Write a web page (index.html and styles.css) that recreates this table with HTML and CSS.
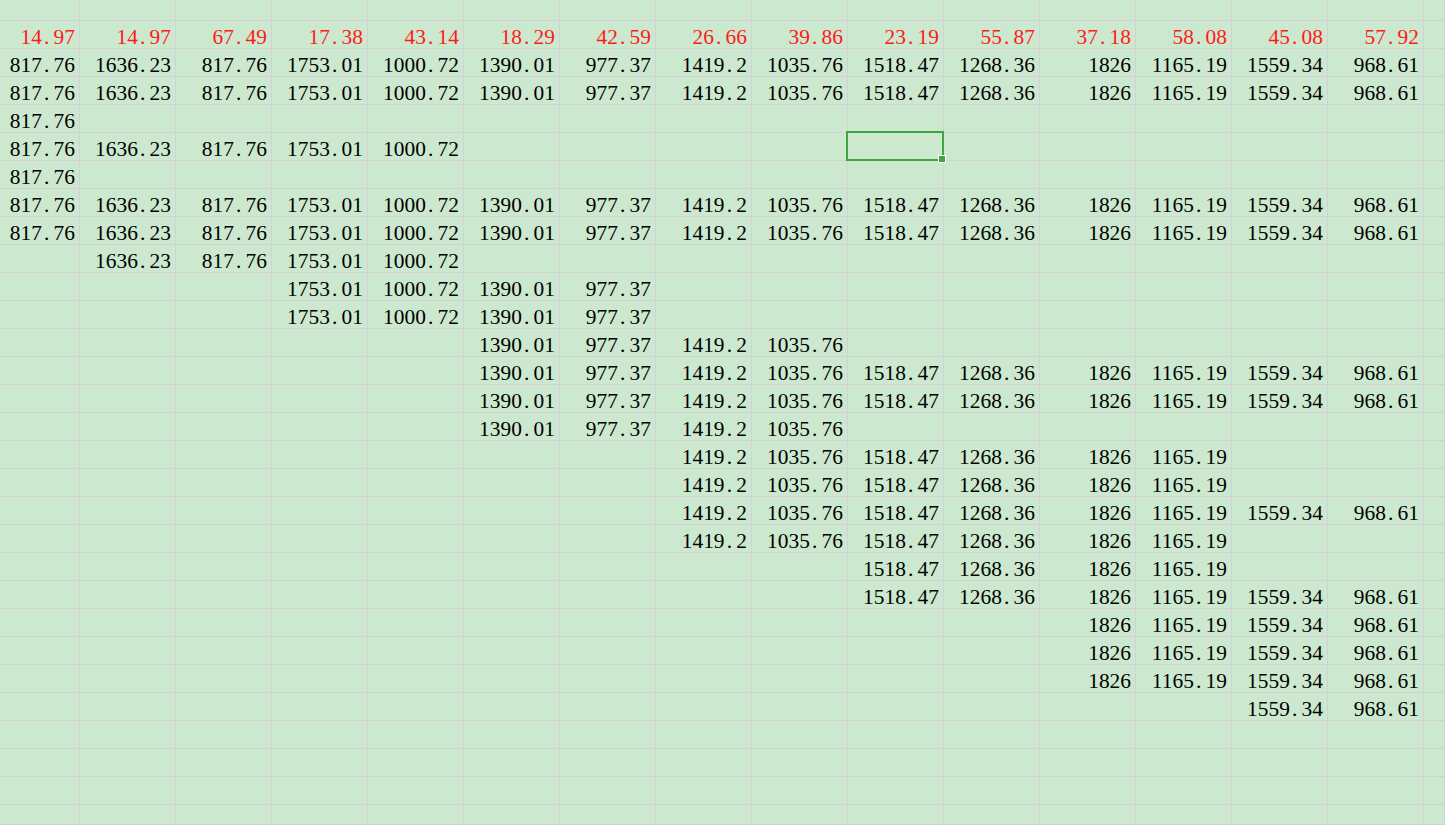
FILE: index.html
```html
<!DOCTYPE html>
<html lang="zh">
<head>
<meta charset="utf-8">
<title>Sheet</title>
<link rel="stylesheet" href="styles.css">
</head>
<body>
<div class="sheet">
<!-- row 0 -->
<div></div><div></div><div></div><div></div><div></div><div></div><div></div><div></div><div></div><div></div><div></div><div></div><div></div><div></div><div></div><div></div>
<!-- row 1 header -->
<div class="r">14<span class="pt">.</span>97</div><div class="r">14<span class="pt">.</span>97</div><div class="r">67<span class="pt">.</span>49</div><div class="r">17<span class="pt">.</span>38</div><div class="r">43<span class="pt">.</span>14</div><div class="r">18<span class="pt">.</span>29</div><div class="r">42<span class="pt">.</span>59</div><div class="r">26<span class="pt">.</span>66</div><div class="r">39<span class="pt">.</span>86</div><div class="r">23<span class="pt">.</span>19</div><div class="r">55<span class="pt">.</span>87</div><div class="r">37<span class="pt">.</span>18</div><div class="r">58<span class="pt">.</span>08</div><div class="r">45<span class="pt">.</span>08</div><div class="r">57<span class="pt">.</span>92</div><div></div>
<!-- row 2 -->
<div>817<span class="pt">.</span>76</div><div>1636<span class="pt">.</span>23</div><div>817<span class="pt">.</span>76</div><div>1753<span class="pt">.</span>01</div><div>1000<span class="pt">.</span>72</div><div>1390<span class="pt">.</span>01</div><div>977<span class="pt">.</span>37</div><div>1419<span class="pt">.</span>2</div><div>1035<span class="pt">.</span>76</div><div>1518<span class="pt">.</span>47</div><div>1268<span class="pt">.</span>36</div><div>1826</div><div>1165<span class="pt">.</span>19</div><div>1559<span class="pt">.</span>34</div><div>968<span class="pt">.</span>61</div><div></div>
<!-- row 3 -->
<div>817<span class="pt">.</span>76</div><div>1636<span class="pt">.</span>23</div><div>817<span class="pt">.</span>76</div><div>1753<span class="pt">.</span>01</div><div>1000<span class="pt">.</span>72</div><div>1390<span class="pt">.</span>01</div><div>977<span class="pt">.</span>37</div><div>1419<span class="pt">.</span>2</div><div>1035<span class="pt">.</span>76</div><div>1518<span class="pt">.</span>47</div><div>1268<span class="pt">.</span>36</div><div>1826</div><div>1165<span class="pt">.</span>19</div><div>1559<span class="pt">.</span>34</div><div>968<span class="pt">.</span>61</div><div></div>
<!-- row 4 -->
<div>817<span class="pt">.</span>76</div><div></div><div></div><div></div><div></div><div></div><div></div><div></div><div></div><div></div><div></div><div></div><div></div><div></div><div></div><div></div>
<!-- row 5 -->
<div>817<span class="pt">.</span>76</div><div>1636<span class="pt">.</span>23</div><div>817<span class="pt">.</span>76</div><div>1753<span class="pt">.</span>01</div><div>1000<span class="pt">.</span>72</div><div></div><div></div><div></div><div></div><div class="sel"></div><div></div><div></div><div></div><div></div><div></div><div></div>
<!-- row 6 -->
<div>817<span class="pt">.</span>76</div><div></div><div></div><div></div><div></div><div></div><div></div><div></div><div></div><div></div><div></div><div></div><div></div><div></div><div></div><div></div>
<!-- row 7 -->
<div>817<span class="pt">.</span>76</div><div>1636<span class="pt">.</span>23</div><div>817<span class="pt">.</span>76</div><div>1753<span class="pt">.</span>01</div><div>1000<span class="pt">.</span>72</div><div>1390<span class="pt">.</span>01</div><div>977<span class="pt">.</span>37</div><div>1419<span class="pt">.</span>2</div><div>1035<span class="pt">.</span>76</div><div>1518<span class="pt">.</span>47</div><div>1268<span class="pt">.</span>36</div><div>1826</div><div>1165<span class="pt">.</span>19</div><div>1559<span class="pt">.</span>34</div><div>968<span class="pt">.</span>61</div><div></div>
<!-- row 8 -->
<div>817<span class="pt">.</span>76</div><div>1636<span class="pt">.</span>23</div><div>817<span class="pt">.</span>76</div><div>1753<span class="pt">.</span>01</div><div>1000<span class="pt">.</span>72</div><div>1390<span class="pt">.</span>01</div><div>977<span class="pt">.</span>37</div><div>1419<span class="pt">.</span>2</div><div>1035<span class="pt">.</span>76</div><div>1518<span class="pt">.</span>47</div><div>1268<span class="pt">.</span>36</div><div>1826</div><div>1165<span class="pt">.</span>19</div><div>1559<span class="pt">.</span>34</div><div>968<span class="pt">.</span>61</div><div></div>
<!-- row 9 -->
<div></div><div>1636<span class="pt">.</span>23</div><div>817<span class="pt">.</span>76</div><div>1753<span class="pt">.</span>01</div><div>1000<span class="pt">.</span>72</div><div></div><div></div><div></div><div></div><div></div><div></div><div></div><div></div><div></div><div></div><div></div>
<!-- row 10 -->
<div></div><div></div><div></div><div>1753<span class="pt">.</span>01</div><div>1000<span class="pt">.</span>72</div><div>1390<span class="pt">.</span>01</div><div>977<span class="pt">.</span>37</div><div></div><div></div><div></div><div></div><div></div><div></div><div></div><div></div><div></div>
<!-- row 11 -->
<div></div><div></div><div></div><div>1753<span class="pt">.</span>01</div><div>1000<span class="pt">.</span>72</div><div>1390<span class="pt">.</span>01</div><div>977<span class="pt">.</span>37</div><div></div><div></div><div></div><div></div><div></div><div></div><div></div><div></div><div></div>
<!-- row 12 -->
<div></div><div></div><div></div><div></div><div></div><div>1390<span class="pt">.</span>01</div><div>977<span class="pt">.</span>37</div><div>1419<span class="pt">.</span>2</div><div>1035<span class="pt">.</span>76</div><div></div><div></div><div></div><div></div><div></div><div></div><div></div>
<!-- row 13 -->
<div></div><div></div><div></div><div></div><div></div><div>1390<span class="pt">.</span>01</div><div>977<span class="pt">.</span>37</div><div>1419<span class="pt">.</span>2</div><div>1035<span class="pt">.</span>76</div><div>1518<span class="pt">.</span>47</div><div>1268<span class="pt">.</span>36</div><div>1826</div><div>1165<span class="pt">.</span>19</div><div>1559<span class="pt">.</span>34</div><div>968<span class="pt">.</span>61</div><div></div>
<!-- row 14 -->
<div></div><div></div><div></div><div></div><div></div><div>1390<span class="pt">.</span>01</div><div>977<span class="pt">.</span>37</div><div>1419<span class="pt">.</span>2</div><div>1035<span class="pt">.</span>76</div><div>1518<span class="pt">.</span>47</div><div>1268<span class="pt">.</span>36</div><div>1826</div><div>1165<span class="pt">.</span>19</div><div>1559<span class="pt">.</span>34</div><div>968<span class="pt">.</span>61</div><div></div>
<!-- row 15 -->
<div></div><div></div><div></div><div></div><div></div><div>1390<span class="pt">.</span>01</div><div>977<span class="pt">.</span>37</div><div>1419<span class="pt">.</span>2</div><div>1035<span class="pt">.</span>76</div><div></div><div></div><div></div><div></div><div></div><div></div><div></div>
<!-- row 16 -->
<div></div><div></div><div></div><div></div><div></div><div></div><div></div><div>1419<span class="pt">.</span>2</div><div>1035<span class="pt">.</span>76</div><div>1518<span class="pt">.</span>47</div><div>1268<span class="pt">.</span>36</div><div>1826</div><div>1165<span class="pt">.</span>19</div><div></div><div></div><div></div>
<!-- row 17 -->
<div></div><div></div><div></div><div></div><div></div><div></div><div></div><div>1419<span class="pt">.</span>2</div><div>1035<span class="pt">.</span>76</div><div>1518<span class="pt">.</span>47</div><div>1268<span class="pt">.</span>36</div><div>1826</div><div>1165<span class="pt">.</span>19</div><div></div><div></div><div></div>
<!-- row 18 -->
<div></div><div></div><div></div><div></div><div></div><div></div><div></div><div>1419<span class="pt">.</span>2</div><div>1035<span class="pt">.</span>76</div><div>1518<span class="pt">.</span>47</div><div>1268<span class="pt">.</span>36</div><div>1826</div><div>1165<span class="pt">.</span>19</div><div>1559<span class="pt">.</span>34</div><div>968<span class="pt">.</span>61</div><div></div>
<!-- row 19 -->
<div></div><div></div><div></div><div></div><div></div><div></div><div></div><div>1419<span class="pt">.</span>2</div><div>1035<span class="pt">.</span>76</div><div>1518<span class="pt">.</span>47</div><div>1268<span class="pt">.</span>36</div><div>1826</div><div>1165<span class="pt">.</span>19</div><div></div><div></div><div></div>
<!-- row 20 -->
<div></div><div></div><div></div><div></div><div></div><div></div><div></div><div></div><div></div><div>1518<span class="pt">.</span>47</div><div>1268<span class="pt">.</span>36</div><div>1826</div><div>1165<span class="pt">.</span>19</div><div></div><div></div><div></div>
<!-- row 21 -->
<div></div><div></div><div></div><div></div><div></div><div></div><div></div><div></div><div></div><div>1518<span class="pt">.</span>47</div><div>1268<span class="pt">.</span>36</div><div>1826</div><div>1165<span class="pt">.</span>19</div><div>1559<span class="pt">.</span>34</div><div>968<span class="pt">.</span>61</div><div></div>
<!-- row 22 -->
<div></div><div></div><div></div><div></div><div></div><div></div><div></div><div></div><div></div><div></div><div></div><div>1826</div><div>1165<span class="pt">.</span>19</div><div>1559<span class="pt">.</span>34</div><div>968<span class="pt">.</span>61</div><div></div>
<!-- row 23 -->
<div></div><div></div><div></div><div></div><div></div><div></div><div></div><div></div><div></div><div></div><div></div><div>1826</div><div>1165<span class="pt">.</span>19</div><div>1559<span class="pt">.</span>34</div><div>968<span class="pt">.</span>61</div><div></div>
<!-- row 24 -->
<div></div><div></div><div></div><div></div><div></div><div></div><div></div><div></div><div></div><div></div><div></div><div>1826</div><div>1165<span class="pt">.</span>19</div><div>1559<span class="pt">.</span>34</div><div>968<span class="pt">.</span>61</div><div></div>
<!-- row 25 -->
<div></div><div></div><div></div><div></div><div></div><div></div><div></div><div></div><div></div><div></div><div></div><div></div><div></div><div>1559<span class="pt">.</span>34</div><div>968<span class="pt">.</span>61</div><div></div>
<!-- row 26 -->
<div></div><div></div><div></div><div></div><div></div><div></div><div></div><div></div><div></div><div></div><div></div><div></div><div></div><div></div><div></div><div></div>
<!-- row 27 -->
<div></div><div></div><div></div><div></div><div></div><div></div><div></div><div></div><div></div><div></div><div></div><div></div><div></div><div></div><div></div><div></div>
<!-- row 28 -->
<div></div><div></div><div></div><div></div><div></div><div></div><div></div><div></div><div></div><div></div><div></div><div></div><div></div><div></div><div></div><div></div>
<!-- row 29 -->
<div></div><div></div><div></div><div></div><div></div><div></div><div></div><div></div><div></div><div></div><div></div><div></div><div></div><div></div><div></div><div></div>
</div>
</body>
</html>
```
FILE: styles.css
```css
html, body {
  margin: 0;
  padding: 0;
  background: #cce8cf;
  overflow: hidden;
}

.sheet {
  display: grid;
  grid-template-columns: 80px repeat(14, 96px) 21px;
  grid-template-rows: 21px repeat(28, 28px) 20px;
  width: 1445px;
  height: 825px;
  font-family: "Liberation Serif", "Times New Roman", serif;
  font-size: 21.4px;
  color: #000;
}

.sheet > div {
  position: relative;
  border-right: 1px solid #d4d0d4;
  border-bottom: 1px solid #d4d0d4;
  text-align: right;
  padding-right: 4px;
  line-height: 33px;
  white-space: nowrap;
}

.sheet > .r {
  color: #ff1a1a;
  line-height: 32px;
}

.pt {
  margin: 0 0.2em 0 0.1em;
}

.sheet > .sel {
  z-index: 1;
}

.sel::after {
  content: "";
  position: absolute;
  left: -2px;
  top: -2px;
  right: -1px;
  bottom: -1px;
  border: 2px solid #41a441;
}

.sel::before {
  content: "";
  position: absolute;
  right: -3px;
  bottom: -3px;
  width: 6px;
  height: 6px;
  background: #41a441;
  border: 1px solid #ffffff;
  z-index: 2;
}
```
